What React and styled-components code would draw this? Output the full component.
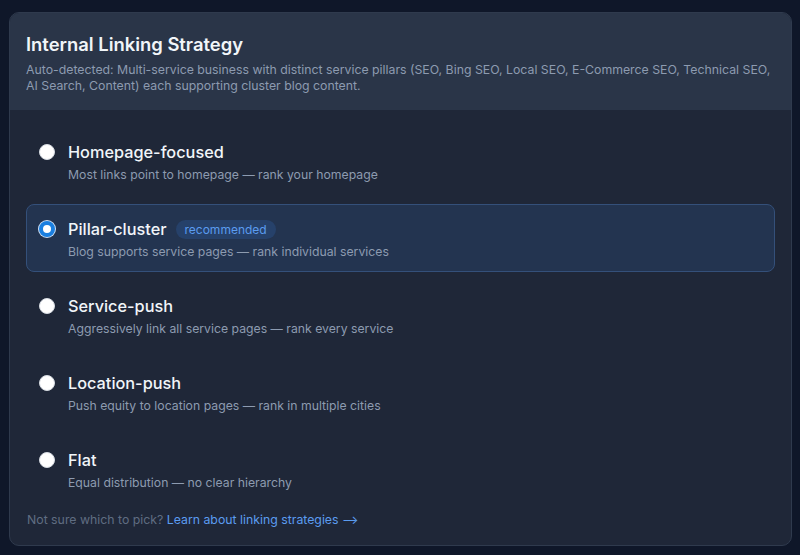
import React, { useState } from 'react';
import styled, { createGlobalStyle } from 'styled-components';

const GlobalStyle = createGlobalStyle`
  html, body {
    margin: 0;
    background: #0f1729;
    font-family: Inter, "Noto Sans", sans-serif;
  }
  body {
    padding: 12px 8px 9px 9px;
  }
`;

const Card = styled.section`
  width: 783px;
  height: 534px;
  box-sizing: border-box;
  border: 1px solid #2f3a4d;
  border-radius: 10px;
  background: #1f2738;
  overflow: hidden;
  display: flex;
  flex-direction: column;
`;

const Header = styled.header`
  background: #2a3548;
  padding: 19px 16px 16px 16px;
`;

const Title = styled.h2`
  margin: 0;
  font-size: 18.4px;
  line-height: 24px;
  font-weight: 600;
  color: #f1f5f9;
`;

const Subtitle = styled.p`
  margin: 6px 0 0;
  font-size: 12.3px;
  line-height: 16px;
  color: #8d9bb0;
`;

const Body = styled.div`
  padding: 17px 16px 16px;
  display: flex;
  flex-direction: column;
`;

const OptionList = styled.div`
  display: flex;
  flex-direction: column;
  gap: 9px;
`;

const Option = styled.label`
  display: flex;
  gap: 13px;
  height: 68px;
  box-sizing: border-box;
  padding: 14px 13px 12px 12px;
  border-radius: 8px;
  border: 1px solid ${p => (p.$active ? '#34507a' : 'transparent')};
  background: ${p => (p.$active ? '#233450' : 'transparent')};
  cursor: pointer;
`;

const Radio = styled.span`
  flex: none;
  width: 16px;
  height: 16px;
  margin-top: 2px;
  box-sizing: border-box;
  border-radius: 50%;
  background: #ffffff;
  border: ${p => (p.$checked ? '4px solid #1a7fe0' : '1px solid #d6dbe2')};
  box-shadow: ${p => (p.$checked ? '0 0 0 1px #cfe0f5' : 'none')};
`;

const Text = styled.div`
  display: flex;
  flex-direction: column;
`;

const NameRow = styled.div`
  display: flex;
  align-items: center;
  gap: 9px;
`;

const Name = styled.span`
  font-size: 16.3px;
  line-height: 20px;
  font-weight: 500;
  color: #f1f5f9;
`;

const Badge = styled.span`
  font-size: 12px;
  line-height: 19px;
  padding: 0 9px;
  border-radius: 10px;
  background: #26416a;
  color: #5b9cf0;
`;

const Desc = styled.span`
  margin-top: 4px;
  font-size: 12.25px;
  line-height: 18px;
  color: #8d9bb0;
`;

const Footer = styled.p`
  margin: 8px 0 0;
  padding-left: 1px;
  font-size: 12.3px;
  line-height: 18px;
  color: #5f6d82;
`;

const Link = styled.a`
  color: #5b9cf0;
  text-decoration: none;
`;

const options = [
  { id: 'homepage', name: 'Homepage-focused', desc: 'Most links point to homepage — rank your homepage' },
  { id: 'pillar', name: 'Pillar-cluster', desc: 'Blog supports service pages — rank individual services', badge: 'recommended' },
  { id: 'service', name: 'Service-push', desc: 'Aggressively link all service pages — rank every service' },
  { id: 'location', name: 'Location-push', desc: 'Push equity to location pages — rank in multiple cities' },
  { id: 'flat', name: 'Flat', desc: 'Equal distribution — no clear hierarchy' },
];

export default function App() {
  const [selected, setSelected] = useState('pillar');
  return (
    <>
      <GlobalStyle />
      <Card>
        <Header>
          <Title>Internal Linking Strategy</Title>
          <Subtitle>
            Auto-detected: Multi-service business with distinct service pillars (SEO, Bing SEO, Local SEO, E-Commerce SEO, Technical SEO, AI Search, Content) each supporting cluster blog content.
          </Subtitle>
        </Header>
        <Body>
          <OptionList>
            {options.map(o => (
              <Option key={o.id} $active={selected === o.id} onClick={() => setSelected(o.id)}>
                <Radio $checked={selected === o.id} />
                <Text>
                  <NameRow>
                    <Name>{o.name}</Name>
                    {o.badge && <Badge>{o.badge}</Badge>}
                  </NameRow>
                  <Desc>{o.desc}</Desc>
                </Text>
              </Option>
            ))}
          </OptionList>
          <Footer>
            Not sure which to pick? <Link href="#">Learn about linking strategies ⟶</Link>
          </Footer>
        </Body>
      </Card>
    </>
  );
}
